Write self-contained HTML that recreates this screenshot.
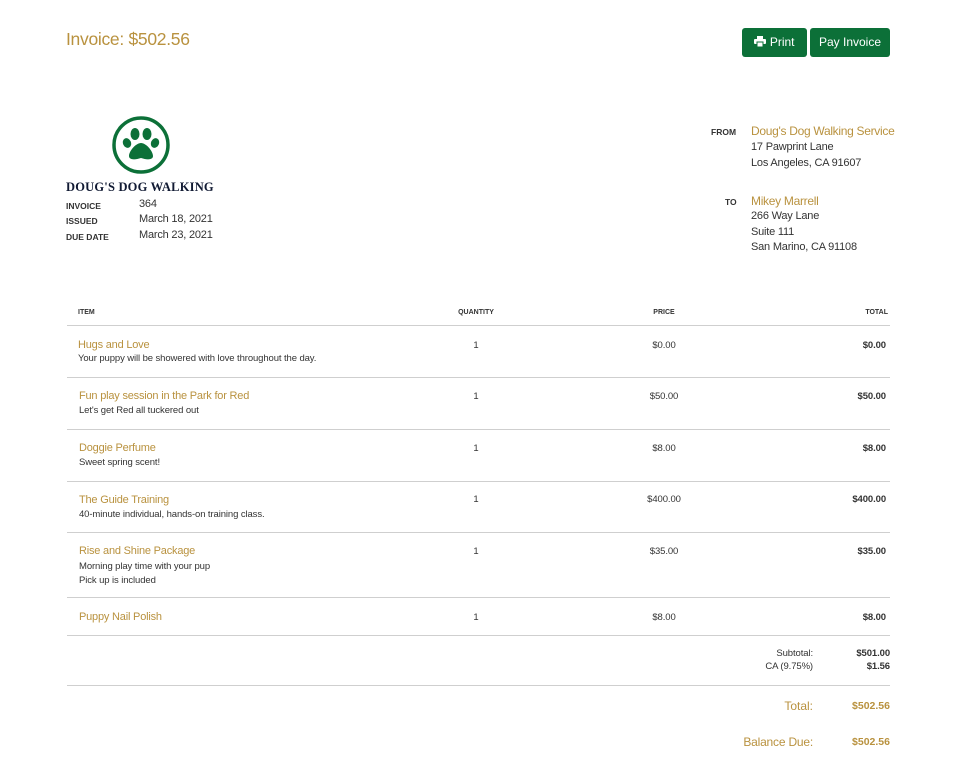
<!DOCTYPE html>
<html><head><style>
body{margin:0;width:960px;height:768px;background:#fff;font-family:"Liberation Sans",sans-serif;color:#333;position:relative;overflow:hidden}
.a{position:absolute;white-space:nowrap}
.gold{color:#b9923f}
.btn{position:absolute;top:28px;height:29px;background:#0c7038;color:#fff;border-radius:3px;font-size:12px;line-height:29px;text-align:center}
.hr{position:absolute;left:67px;width:823px;height:1px;background:#cfcfcf}
.lab{font-size:8.5px;font-weight:bold;color:#333}
.t{font-size:11px;letter-spacing:-0.2px}
.s{font-size:9.5px;letter-spacing:-0.1px}
.b{font-size:11px;letter-spacing:-0.2px}
.c{text-align:center;width:100px}
.r{text-align:right}
</style></head><body>
<div class="a gold" style="left:66px;top:29px;font-size:17.5px;letter-spacing:-0.3px">Invoice: $502.56</div>
<div class="btn" style="left:742px;width:65px"><svg width="12" height="11" viewBox="0 0 12 11" style="vertical-align:-1px"><rect x="3" y="0" width="6" height="3" fill="#fff"/><rect x="0" y="3" width="12" height="5" rx="1" fill="#fff"/><rect x="3" y="6" width="6" height="5" fill="#fff" stroke="#0c7038" stroke-width="1"/></svg> Print</div>
<div class="btn" style="left:810px;width:80px">Pay Invoice</div>

<svg class="a" style="left:111px;top:115px" width="60" height="60" viewBox="0 0 60 60"><circle cx="30" cy="30" r="27" fill="none" stroke="#0c7038" stroke-width="3.5"/>
<g fill="#0c7038"><ellipse cx="24" cy="19" rx="4.5" ry="6"/><ellipse cx="36" cy="19" rx="4.5" ry="6"/><ellipse cx="16" cy="28" rx="4" ry="5" transform="rotate(-25 16 28)"/><ellipse cx="44" cy="28" rx="4" ry="5" transform="rotate(25 44 28)"/><path d="M30 28c-5 0-12 8-12 13 0 4 6 4 12 2 6 2 12 2 12-2 0-5-7-13-12-13z"/></g></svg>
<div class="a" style="left:66px;top:180px;font-family:'Liberation Serif',serif;font-weight:bold;font-size:12.5px;color:#111a33;letter-spacing:.2px">DOUG'S DOG WALKING</div>
<div class="a lab" style="left:66px;top:201px">INVOICE</div><div class="a b" style="left:139px;top:198px">364</div>
<div class="a lab" style="left:66px;top:216px">ISSUED</div><div class="a b" style="left:139px;top:213px">March 18, 2021</div>
<div class="a lab" style="left:66px;top:232px">DUE DATE</div><div class="a b" style="left:139px;top:229px">March 23, 2021</div>

<div class="a lab" style="left:711px;top:127px">FROM</div>
<div class="a gold" style="left:751px;top:124px;font-size:12px;letter-spacing:-0.3px">Doug's Dog Walking Service</div>
<div class="a b" style="left:751px;top:139px;line-height:16px">17 Pawprint Lane<br>Los Angeles, CA 91607</div>
<div class="a lab" style="left:725px;top:197px">TO</div>
<div class="a gold" style="left:751px;top:194px;font-size:12px;letter-spacing:-0.3px">Mikey Marrell</div>
<div class="a b" style="left:751px;top:209px;line-height:15.5px">266 Way Lane<br>Suite 111<br>San Marino, CA 91108</div>

<div class="a" style="left:78px;top:309px;font-size:7px;font-weight:bold">ITEM</div>
<div class="a c" style="left:426px;top:309px;font-size:7px;font-weight:bold">QUANTITY</div>
<div class="a c" style="left:614px;top:309px;font-size:7px;font-weight:bold">PRICE</div>
<div class="a r" style="right:72px;top:309px;font-size:7px;font-weight:bold">TOTAL</div>
<div class="hr" style="top:325px"></div>

<div class="a gold t" style="left:78px;top:339px">Hugs and Love</div><div class="a s" style="left:78px;top:353px">Your puppy will be showered with love throughout the day.</div>
<div class="a c s" style="left:426px;top:340px">1</div><div class="a c s" style="left:614px;top:340px">$0.00</div><div class="a r s" style="right:74px;top:340px;font-weight:bold">$0.00</div>
<div class="hr" style="top:377px"></div>

<div class="a gold t" style="left:79px;top:390px">Fun play session in the Park for Red</div><div class="a s" style="left:79px;top:405px">Let's get Red all tuckered out</div>
<div class="a c s" style="left:426px;top:391px">1</div><div class="a c s" style="left:614px;top:391px">$50.00</div><div class="a r s" style="right:74px;top:391px;font-weight:bold">$50.00</div>
<div class="hr" style="top:429px"></div>

<div class="a gold t" style="left:79px;top:442px">Doggie Perfume</div><div class="a s" style="left:79px;top:457px">Sweet spring scent!</div>
<div class="a c s" style="left:426px;top:443px">1</div><div class="a c s" style="left:614px;top:443px">$8.00</div><div class="a r s" style="right:74px;top:443px;font-weight:bold">$8.00</div>
<div class="hr" style="top:481px"></div>

<div class="a gold t" style="left:79px;top:494px">The Guide Training</div><div class="a s" style="left:79px;top:509px">40-minute individual, hands-on training class.</div>
<div class="a c s" style="left:426px;top:494px">1</div><div class="a c s" style="left:614px;top:494px">$400.00</div><div class="a r s" style="right:74px;top:494px;font-weight:bold">$400.00</div>
<div class="hr" style="top:532px"></div>

<div class="a gold t" style="left:79px;top:545px">Rise and Shine Package</div><div class="a s" style="left:79px;top:560px;line-height:14px">Morning play time with your pup<br>Pick up is included</div>
<div class="a c s" style="left:426px;top:546px">1</div><div class="a c s" style="left:614px;top:546px">$35.00</div><div class="a r s" style="right:74px;top:546px;font-weight:bold">$35.00</div>
<div class="hr" style="top:597px"></div>

<div class="a gold t" style="left:79px;top:611px">Puppy Nail Polish</div>
<div class="a c s" style="left:426px;top:612px">1</div><div class="a c s" style="left:614px;top:612px">$8.00</div><div class="a r s" style="right:74px;top:612px;font-weight:bold">$8.00</div>
<div class="hr" style="top:635px"></div>

<div class="a r s" style="right:147px;top:648px">Subtotal:</div><div class="a r s" style="right:70px;top:648px;font-weight:bold">$501.00</div>
<div class="a r s" style="right:147px;top:661px">CA (9.75%)</div><div class="a r s" style="right:70px;top:661px;font-weight:bold">$1.56</div>
<div class="hr" style="top:685px"></div>
<div class="a r gold" style="right:147px;top:699px;font-size:12px">Total:</div><div class="a r gold" style="right:70px;top:700px;font-weight:bold;font-size:10.5px">$502.56</div>
<div class="a r gold" style="right:147px;top:735px;font-size:12px;letter-spacing:-0.2px">Balance Due:</div><div class="a r gold" style="right:70px;top:736px;font-weight:bold;font-size:10.5px">$502.56</div>
</body></html>
